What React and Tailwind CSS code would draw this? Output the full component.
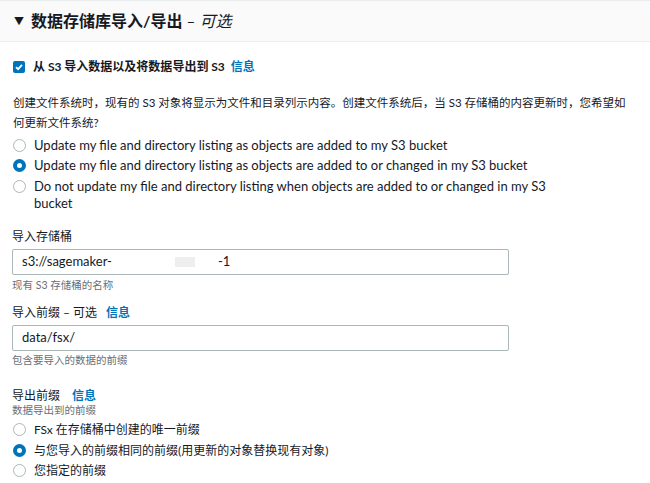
import React from 'react';

const font = { fontFamily: 'Lato, "Noto Sans CJK SC", sans-serif' };

const Radio = ({ checked }) =>
  checked ? (
    <span className="mt-[2px] w-[13px] h-[13px] shrink-0 rounded-full border-[4px] border-[#0073bb] bg-white" />
  ) : (
    <span className="mt-[2px] w-[13px] h-[13px] shrink-0 rounded-full border border-[#aab7b8] bg-white" />
  );

const RadioGroup = ({ options, selected, className }) => (
  <div className={`flex flex-col gap-[3.5px] ${className}`}>
    {options.map((o, i) => (
      <label key={i} className="flex items-start gap-[8px] leading-[17px] text-[#16191f]">
        <Radio checked={i === selected} />
        <span>{o}</span>
      </label>
    ))}
  </div>
);

const Info = ({ gap }) => <span className={`${gap} text-[12px] font-bold text-[#0073bb]`}>信息</span>;

export default function App() {
  return (
    <div className="w-[650px] h-[483px] bg-white overflow-hidden" style={font}>
      <div className="h-[42px] bg-[#fafafa] border-t border-b border-[#eaeded] flex items-center pl-[14px]">
        <span className="text-[10px] text-[#16191f] mr-[7px]">▼</span>
        <h2 className="text-[16px] font-bold text-[#16191f]">
          数据存储库导入/导出 <span className="font-normal italic">– 可选</span>
        </h2>
      </div>

      <div className="px-[12px]">
        <div className="mt-[16px] flex items-center h-[18px] pl-px">
          <span className="w-[12px] h-[12px] rounded-[2px] bg-[#0073bb] flex items-center justify-center">
            <svg width="10" height="10" viewBox="0 0 10 10">
              <path d="M2 5.2 L4.1 7.2 L8 2.8" fill="none" stroke="white" strokeWidth="1.8" />
            </svg>
          </span>
          <span className="ml-[8px] text-[12px] font-bold text-[#16191f]">从 S3 导入数据以及将数据导出到 S3</span>
          <Info gap="ml-[6px]" />
        </div>

        <p className="mt-[17px] text-[11.5px] leading-[19.5px] text-[#16191f] pl-px whitespace-nowrap">
          创建文件系统时，现有的 S3 对象将显示为文件和目录列示内容。创建文件系统后，当 S3 存储桶的内容更新时，您希望如
          <br />
          何更新文件系统?
        </p>

        <RadioGroup
          className="mt-[4.5px] pl-px text-[13px]"
          selected={1}
          options={[
            'Update my file and directory listing as objects are added to my S3 bucket',
            'Update my file and directory listing as objects are added to or changed in my S3 bucket',
            <>Do not update my file and directory listing when objects are added to or changed in my S3<br />bucket</>,
          ]}
        />

        <div className="mt-[16.5px] text-[12px] leading-[18px] text-[#16191f]">导入存储桶</div>
        <div className="mt-[3px] w-[497px] h-[26px] border border-[#aab7b8] rounded-[2px] flex items-center pl-[9px] text-[13px] text-[#16191f]">
          <span>s3://sagemaker-</span>
          <span className="ml-[63px] w-[20px] h-[10px] bg-[#eeeeee]" />
          <span className="ml-[23px]">-1</span>
        </div>
        <div className="mt-[3px] text-[10.5px] leading-[14px] text-[#687078]">现有 S3 存储桶的名称</div>

        <div className="mt-[12px] text-[12px] leading-[18px] text-[#16191f]">
          导入前缀 – 可选<Info gap="ml-[9px]" />
        </div>
        <div className="mt-[3px] w-[497px] h-[26px] border border-[#aab7b8] rounded-[2px] flex items-center pl-[9px] text-[13px] text-[#16191f]">
          data/fsx/
        </div>
        <div className="mt-[2px] text-[10.5px] leading-[14px] text-[#687078]">包含要导入的数据的前缀</div>

        <div className="mt-[21px] text-[12px] leading-[16px] text-[#16191f]">
          导出前缀<Info gap="ml-[12px]" />
        </div>
        <div className="text-[10.5px] leading-[13px] text-[#687078]">数据导出到的前缀</div>

        <RadioGroup
          className="mt-[4px] pl-px text-[12px]"
          selected={1}
          options={['FSx 在存储桶中创建的唯一前缀', '与您导入的前缀相同的前缀(用更新的对象替换现有对象)', '您指定的前缀']}
        />
      </div>
    </div>
  );
}
